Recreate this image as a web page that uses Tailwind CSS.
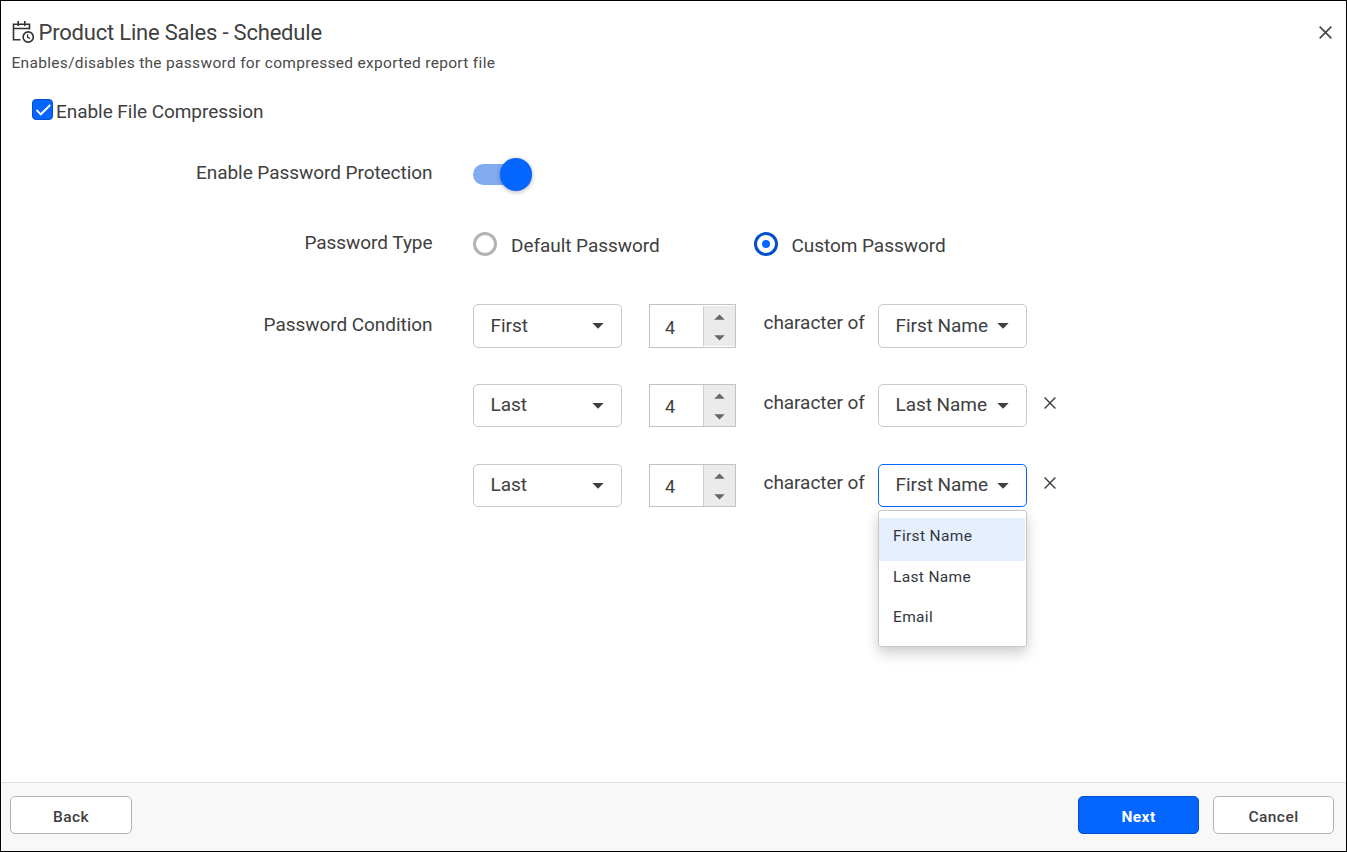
<!DOCTYPE html>
<html lang="en">
<head>
<meta charset="utf-8">
<title>Product Line Sales - Schedule</title>
<script src="https://cdn.jsdelivr.net/npm/@tailwindcss/browser@4"></script>
</head>
<body class="h-screen overflow-hidden bg-white font-['Roboto',sans-serif] text-[#404040]">
<svg class="hidden">
  <symbol id="caret" viewBox="0 0 12 6"><path d="M0.3 0h11.4L6 5.8z" fill="currentColor"/></symbol>
  <symbol id="close" viewBox="0 0 12 12"><path d="M.6.6l10.8 10.8M11.4.6L.6 11.4" fill="none" stroke="currentColor" stroke-width="1.4"/></symbol>
</svg>
<div class="flex h-[852px] w-[1347px] flex-col border border-black">
  <header class="flex h-[81px] justify-between pl-[10.500px] pr-[14px]">
    <div>
      <div class="mt-[18px] flex h-7 items-center gap-[5px]">
        <svg class="-mt-[2px] h-[22px] w-[22px]" viewBox="0 0 22 22" fill="none" stroke="#333" stroke-width="1.600"><path d="M8.500 18.700H1.500V3.200H17.500V8.500M1.500 7.500H17.500M6.200 0V5M12.800 0V5"/><circle cx="16.200" cy="16" r="5.100"/><path d="M15.600 13.200V16.400L18 17.300" stroke-width="1.300"/></svg>
        <h1 class="text-[22px] leading-7 tracking-[-0.2px]">Product Line Sales - Schedule</h1>
      </div>
      <p class="mt-[6px] text-[15.500px] leading-5 tracking-[0.31px] text-[#4a4a4a]">Enables/disables the password for compressed exported report file</p>
    </div>
    <svg class="mt-[25px] h-[13px] w-[13px]"><use href="#close"/></svg>
  </header>
  <main class="flex-1 text-[19px] leading-[24px] tracking-[-0.05px]">
    <div class="mt-[16px] ml-[31px] flex h-[24px] gap-[3px]">
      <div class="mt-px grid h-[21px] w-[21px] place-items-center rounded-[4px] border border-[#0450cc] bg-[#0565ff]"><svg class="ml-[2px] mt-px h-[12px] w-[15px]" viewBox="0 0 15 12" fill="none" stroke="white" stroke-width="1.900"><path d="M0.500 6l4.300 4.300L14.200 1"/></svg></div>
      <span class="mt-[2px]">Enable File Compression</span>
    </div>
    <div class="mt-[34px] flex h-[36px] gap-[40.500px]">
      <div class="w-[431.500px] pt-[5px] text-right">Enable Password Protection</div>
      <div class="relative mt-[8px] h-[21px] w-[50px] rounded-full bg-[#82acf2]"><div class="absolute -top-[6px] left-[27px] h-[33px] w-[32px] rounded-full bg-[#0565ff] shadow-[0_1px_5px_rgba(0,0,0,0.3)]"></div></div>
    </div>
    <div class="mt-[38px] flex h-[28px] gap-[40.500px]">
      <div class="w-[431.500px] pt-px text-right">Password Type</div>
      <div class="flex items-start">
        <div class="mt-[2px] h-6 w-6 rounded-full border-3 border-[#b3b3b3]"></div>
        <div class="ml-[14px] mt-[4px] w-[243px]">Default Password</div>
        <div class="mt-[2px] grid h-6 w-6 place-items-center rounded-full border-3 border-[#0450cc]"><div class="h-2 w-2 rounded-full bg-[#0565ff]"></div></div>
        <div class="ml-[13.500px] mt-[4px]">Custom Password</div>
      </div>
    </div>
    <div class="mt-[46px] flex gap-[40.500px]">
      <div class="w-[431.500px] pt-[9px] text-right">Password Condition</div>
      <div class="flex flex-col gap-[36px]">
        <div class="flex h-[44px]">
          <div class="flex h-[44px] w-[149px] items-center justify-between rounded-[5px] border border-[#c8c8c8] pl-[16.500px] pr-[17px]"><span>First</span><svg class="h-[6px] w-[12px]"><use href="#caret"/></svg></div>
          <div class="ml-[27px] flex h-[44px] w-[87px] border border-[#c3c3c3]">
            <div class="flex-1 pl-[15px] pt-[11px] text-[18px]">4</div>
            <div class="mb-px mt-px flex w-[32px] flex-col items-center justify-between border-l border-[#d0d0d0] bg-[#ebebeb] pb-[5px] pt-[8px] text-[#666]"><svg class="h-[6px] w-[11px] rotate-180"><use href="#caret"/></svg><svg class="h-[6px] w-[11px]"><use href="#caret"/></svg></div>
          </div>
          <div class="ml-[27.500px] w-[114.500px] pt-[7px]">character of</div>
          <div class="flex h-[44px] w-[149px] items-center justify-between rounded-[5px] border border-[#c8c8c8] pl-[16.500px] pr-[17px]"><span>First Name</span><svg class="h-[6px] w-[12px]"><use href="#caret"/></svg></div>
        </div>
        <div class="flex h-[43px]">
          <div class="flex h-[43px] w-[149px] items-center justify-between rounded-[5px] border border-[#c8c8c8] pl-[16.500px] pr-[17px]"><span class="pb-[2px]">Last</span><svg class="h-[6px] w-[12px]"><use href="#caret"/></svg></div>
          <div class="ml-[27px] flex h-[43px] w-[87px] border border-[#c3c3c3]">
            <div class="flex-1 pl-[15px] pt-[10px] text-[18px]">4</div>
            <div class="flex w-[32px] flex-col items-center justify-between border-l border-[#d0d0d0] bg-[#ebebeb] pb-[6px] pt-[8px] text-[#666]"><svg class="h-[6px] w-[11px] rotate-180"><use href="#caret"/></svg><svg class="h-[6px] w-[11px]"><use href="#caret"/></svg></div>
          </div>
          <div class="ml-[27.500px] w-[114.500px] pt-[7px]">character of</div>
          <div class="flex h-[43px] w-[149px] items-center justify-between rounded-[5px] border border-[#c8c8c8] pl-[16.500px] pr-[17px]"><span class="pb-[2px]">Last Name</span><svg class="h-[6px] w-[12px]"><use href="#caret"/></svg></div>
          <svg class="ml-[16.500px] mt-[13px] h-[12px] w-[12px]"><use href="#close"/></svg>
        </div>
        <div class="mt-px flex h-[43px]">
          <div class="flex h-[43px] w-[149px] items-center justify-between rounded-[5px] border border-[#c8c8c8] pl-[16.500px] pr-[17px]"><span class="pb-[2px]">Last</span><svg class="h-[6px] w-[12px]"><use href="#caret"/></svg></div>
          <div class="ml-[27px] flex h-[43px] w-[87px] border border-[#c3c3c3]">
            <div class="flex-1 pl-[15px] pt-[10px] text-[18px]">4</div>
            <div class="flex w-[32px] flex-col items-center justify-between border-l border-[#d0d0d0] bg-[#ebebeb] pb-[6px] pt-[8px] text-[#666]"><svg class="h-[6px] w-[11px] rotate-180"><use href="#caret"/></svg><svg class="h-[6px] w-[11px]"><use href="#caret"/></svg></div>
          </div>
          <div class="ml-[27.500px] w-[114.500px] pt-[7px]">character of</div>
          <div class="relative">
            <div class="flex h-[43px] w-[149px] items-center justify-between rounded-[5px] border border-[#0565ff] pl-[16.500px] pr-[17px]"><span class="pb-[2px]">First Name</span><svg class="h-[6px] w-[12px]"><use href="#caret"/></svg></div>
            <ul class="absolute left-0 top-[46px] h-[137px] w-[149px] rounded-[3px] border border-[#c8c8c8] bg-white pr-px pt-[7px] text-[15.500px] tracking-[0.34px] text-[#33373e] shadow-[0_6px_14px_rgba(0,0,0,0.2)]">
              <li class="h-[43px] bg-[#e6effe] pl-[14px] pt-[6px]">First Name</li>
              <li class="h-[40px] pl-[14px] pt-[4px]">Last Name</li>
              <li class="h-[40px] pl-[14px] pt-[4px]">Email</li>
            </ul>
          </div>
          <svg class="ml-[16.500px] mt-[13px] h-[12px] w-[12px]"><use href="#close"/></svg>
        </div>
      </div>
    </div>
  </main>
  <footer class="flex h-[69px] items-start border-t border-[#e0e0e0] bg-[#f8f8f8] pl-[9px] pr-[12px] pt-[13px] text-[15.500px] font-medium tracking-[0.45px]">
    <button class="h-[38px] w-[122px] rounded-[5px] border border-[#b3b3b3] bg-white pt-[5px]">Back</button>
    <button class="ml-auto h-[38px] w-[121px] rounded-[5px] border border-[#0450cc] bg-[#0565ff] pt-[5px] font-bold text-white">Next</button>
    <button class="ml-[14px] h-[38px] w-[121px] rounded-[5px] border border-[#b3b3b3] bg-white pt-[5px]">Cancel</button>
  </footer>
</div>
</body>
</html>
